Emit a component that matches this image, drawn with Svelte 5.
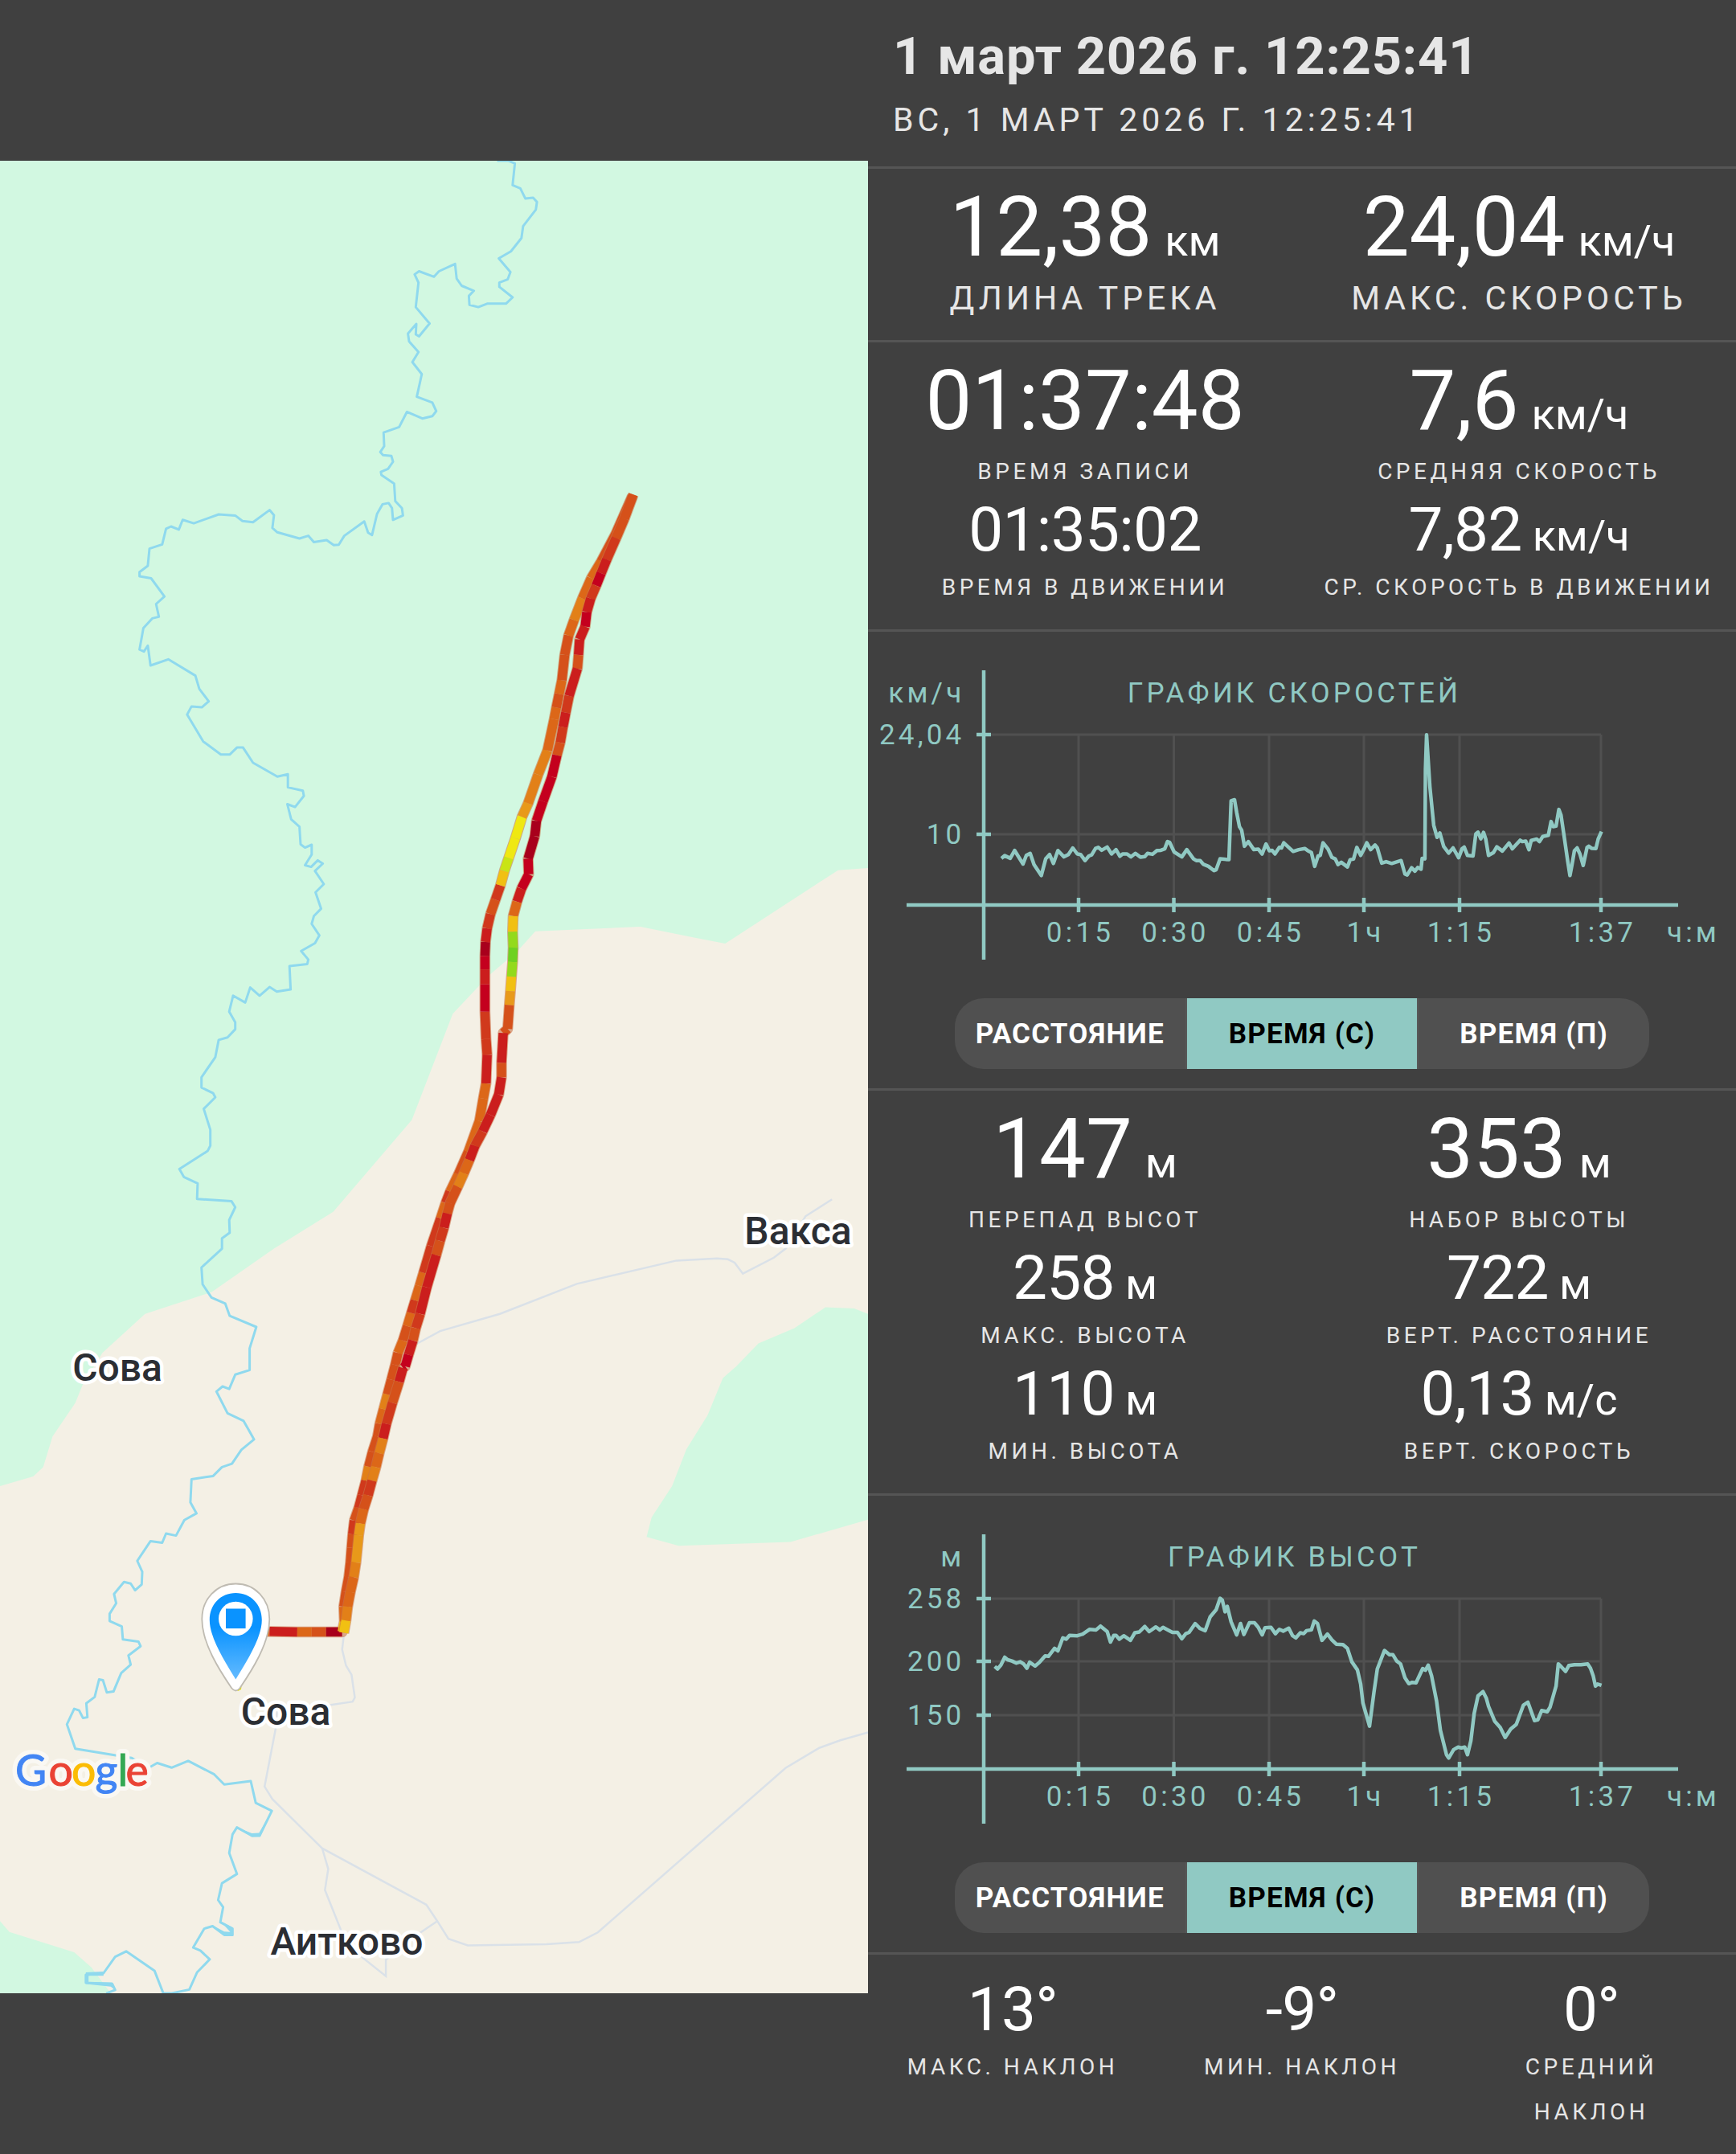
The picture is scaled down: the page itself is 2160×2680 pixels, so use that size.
<script>
  const title = '1 март 2026 г. 12:25:41';
  const subtitle = 'вс, 1 март 2026 г. 12:25:41';

  const summary = [
    { value: '12,38', unit: 'км', label: 'Длина трека' },
    { value: '24,04', unit: 'км/ч', label: 'Макс. скорость' }
  ];

  const speedStats = [
    { value: '01:37:48', label: 'Время записи', big: true },
    { value: '7,6', unit: 'км/ч', label: 'Средняя скорость', big: true },
    { value: '01:35:02', label: 'Время в движении' },
    { value: '7,82', unit: 'км/ч', label: 'Ср. скорость в движении' }
  ];

  const heightStats = [
    { value: '147', unit: 'м', label: 'Перепад высот', big: true },
    { value: '353', unit: 'м', label: 'Набор высоты', big: true },
    { value: '258', unit: 'м', label: 'Макс. высота' },
    { value: '722', unit: 'м', label: 'Верт. расстояние' },
    { value: '110', unit: 'м', label: 'Мин. высота' },
    { value: '0,13', unit: 'м/с', label: 'Верт. скорость' }
  ];

  const slopeStats = [
    { value: '13°', label: 'Макс. наклон' },
    { value: '-9°', label: 'Мин. наклон' },
    { value: '0°', label: 'Средний наклон' }
  ];

  const modes = ['Расстояние', 'Время (с)', 'Время (п)'];
  let speedMode = $state(1);
  let heightMode = $state(1);

  // Sample grids are 1568 units wide; each one has its own vertical step
  const SX = 1080 / 1568;
  const tiles = {
    a: { sy: 760 / 1568, oy: -20 },
    b: { sy: 800 / 1568, oy: 700 },
    c: { sy: 820 / 1568, oy: 1480 }
  };

  function project(points, { sy, oy }) {
    return points
      .trim()
      .split(/\s+/)
      .map((p) => {
        const [x, y] = p.split(',').map(Number);
        return `${(x * SX).toFixed(1)},${(y * sy + oy).toFixed(1)}`;
      })
      .join(' ');
  }

  const river = [
    project('898,41 918,41 930,48 926,104 940,112 949,138 963,136 970,147 968,167 945,209 942,240 923,274 901,292 922,327 917,346 902,354 902,365 926,392 914,408 880,408 864,417 848,411 847,388 856,375 834,362 825,344 822,306 793,325 784,339 757,325 749,333 756,354 751,417 776,459 757,492 751,487 752,460 737,485 739,505 756,532 745,558 762,589 753,647 781,662 788,684 781,697 763,703 735,686 721,725 693,739 694,774 687,789 692,797 707,799 710,814 701,832 688,840 689,848 712,870 714,915 726,933 728,952 710,963 708,933 702,920 691,923 681,948 672,1002 665,996 658,967 622,1004 612,1027 603,1028 590,1015 567,1020 557,1004 541,1011 501,995 492,984 495,951 487,938 457,969 438,966 425,952 395,949 350,972 330,963 323,988 309,980 300,986 293,1026 270,1037 267,1081 252,1097 252,1108 273,1113 297,1160 282,1179 287,1212 275,1216 259,1241 252,1296 260,1301 267,1286 272,1337 304,1321 353,1363 360,1397 377,1429 365,1444 346,1442 338,1463 367,1532', tiles.a),
    project('399,76 415,76 428,59 439,59 457,96 501,130 520,124 520,156 547,164 549,177 533,204 519,197 526,234 541,252 543,295 551,303 563,296 563,320 551,346 562,350 574,334 583,342 569,360 585,392 570,412 580,452 567,470 563,489 577,517 569,536 544,555 557,576 555,587 523,592 525,649 500,654 487,643 469,664 452,644 443,681 421,664 414,703 425,729 425,746 411,766 395,772 389,814 364,863 364,888 385,902 389,912 368,940 380,991 380,1030 375,1043 324,1087 332,1106 357,1122 356,1160 418,1165 425,1180 414,1211 415,1242 401,1256 401,1281 364,1327 366,1368 382,1400 407,1415 415,1445 463,1472 451,1524 451,1560', tiles.b),
    project('451,47 425,58 414,92 402,86 391,98 411,150 440,168 459,212 436,237 419,270 401,278 385,299 346,307 344,362 355,388 333,404 318,441 300,436 293,458 272,454 248,501 257,527 256,557 244,571 236,555 224,551 206,580 210,602 198,627 198,644 220,657 222,688 250,693 254,704 232,726 236,748 219,768 205,812 193,814 186,785 179,783 171,825 156,840 158,873 150,875 143,857 134,853 121,890 136,948 238,970 268,994 284,982 310,993 340,977 387,1009 405,1033 453,1025 462,1077 491,1096 469,1155 455,1155 428,1135 420,1152 414,1196 428,1246 401,1268 394,1308 403,1325 398,1361 420,1376 420,1391 405,1391 384,1370 369,1376 349,1421 362,1428 379,1449 356,1480 342,1521 309,1530 295,1530 279,1476 228,1430 208,1443 187,1482 155,1486 155,1505 203,1508 208,1522 192,1530', tiles.c)
  ].join(' ');

  // Places where the river widens
  const pools = [
    project('428,1135 455,1149 468,1148 491,1096 470,1157 455,1158', tiles.c),
    project('398,1358 421,1374 420,1393 404,1392 384,1368 405,1383 416,1384', tiles.c),
    project('155,1480 187,1478 187,1488 160,1488 160,1503 203,1504 208,1522 200,1514 155,1508', tiles.c)
  ];

  const forests = [
    '0,0 1080,0 ' +
      project('1568,353 1514,358 1310,537 1252,522 1157,496 967,507 935,555 883,615 818,708 744,967 602,1191 495,1281 382,1387 262,1440 185,1535', tiles.b) +
      ' ' +
      project('150,80 136,125 95,205 78,278 60,300 0,323', tiles.c),
    project('1568,1440 1543,1427 1491,1424 1435,1475 1370,1512 1330,1568', tiles.b) +
      ' ' +
      project('1306,66 1278,155 1240,235 1214,323 1177,398 1168,444 1226,465 1428,456 1568,403', tiles.c),
    project('0,1358 17,1384 134,1432 165,1468 200,1530 0,1530', tiles.c)
  ];

  const roads = [
    project('1503,1161 1455,1202 1420,1280 1398,1303 1342,1342 1327,1315 1315,1307 1295,1305 1222,1310 1042,1367 903,1440 795,1482 750,1515', tiles.b),
    project('621,680 618,712 625,750 635,772 641,826 637,836 595,844 500,855 498,900 478,1038 492,1068 582,1185 770,1319 790,1358 810,1400 845,1416 987,1413 1046,1408 1080,1385 1419,994 1480,946 1518,928 1568,909', tiles.c),
    project('582,1185 593,1234 587,1284 616,1380 655,1445 697,1489 697,1450 760,1385 790,1358', tiles.c)
  ];

  // Track segments are coloured by speed, from dark red (slow) to green (fast)
  const speedColors = {
    a: '#a8001c', b: '#c4001e', c: '#cb1e1d', d: '#d0391c', e: '#d5511a',
    f: '#dc6718', g: '#e28018', h: '#e8991a', i: '#f1c012', y: '#efe812',
    l: '#c9e414', k: '#93da1c', n: '#6fd121'
  };

  // Each point carries the colour of the segment that ends in it
  function parseTrack(points, tile) {
    return points.split(' ').map((p) => {
      const [x, y, color] = p.split(',');
      return { x: x * SX, y: y * tile.sy + tile.oy, color: speedColors[color] };
    });
  }

  function toTrack(points) {
    return {
      outline: points.map((p) => `${p.x.toFixed(1)},${p.y.toFixed(1)}`).join(' '),
      segments: points.slice(1).map((p, i) => ({ x1: points[i].x, y1: points[i].y, x2: p.x, y2: p.y, color: p.color }))
    };
  }

  const wayOut = [
    ...parseTrack('440,669,c 487,669,f 537,670,c 563,670,f 589,670,e 618,670,a 622,645,i 621,610,f 625,575,e 630,540,e 633,505,e 635,470,e 637,438,e 640,405,d 648,375,e 654,345,d 661,310,d 666,277,g 673,242,e 682,205,e 686,175,e 693,140,f 700,105,g 707,70,e 714,35,e', tiles.c),
    ...parseTrack('719,1535,e 728,1505,f 736,1470,e 743,1438,f 750,1407,d 758,1372,f 765,1340,f 779,1275,d 796,1207,d 805,1170,f 813,1142,d 828,1100,f 846,1045,e 866,970,f 873,915,f 878,878,f 880,808,c 878,770,d 876,703,d 876,636,b 876,600,c 876,567,b 877,533,a 880,500,c 886,465,d 895,430,e 904,395,d 911,360,i 919,328,l 931,280,y 943,228,y 954,195,h 972,125,g 989,66,g', tiles.b),
    ...parseTrack('1001,1475,f 1005,1445,f 1010,1410,e 1015,1375,f 1020,1310,e 1027,1260,e 1037,1220,f 1052,1165,g 1068,1113,f 1086,1070,f 1112,1000,e 1142,903,e', tiles.a)
  ];

  const wayBack = [
    ...parseTrack('1144,898,e 1128,960,e 1113,1010,e 1096,1065,d 1086,1100,c 1077,1132,b 1067,1165,d 1060,1200,c 1057,1237,b 1047,1270,c 1045,1310,c 1043,1345,e 1028,1415,c 1022,1458,d 1017,1495,c 1012,1535,d', tiles.a),
    ...parseTrack('1006,78,e 997,130,b 981,190,b 969,238,b 966,275,a 954,330,a 955,368,b 942,403,b 934,435,c 927,470,f 926,508,i 927,547,k 926,582,n 924,618,k 922,653,i 920,687,h 917,745,e 909,755,e 906,828,c 906,863,e 901,905,c 886,955,c 872,995,c 858,1030,d 848,1065,c 838,1097,f 827,1130,g 813,1170,e 808,1195,e 802,1230,c 795,1262,d 788,1297,e 771,1375,c 759,1440,c 751,1475,d 746,1505,e 738,1540,c 732,1568,b', tiles.b),
    ...parseTrack('728,42,b 721,75,c 709,125,e 698,175,d 692,210,c 685,245,g 679,278,f 672,310,g 665,345,d 657,378,e 651,412,f 648,440,h 643,505,h 639,540,g 633,575,f 628,610,f 625,643,g 621,672,i', tiles.c)
  ];

  const tracks = [toTrack(wayOut), toTrack(wayBack)];

  const places = [
    { name: 'Вакса', x: 993, y: 1348 },
    { name: 'Сова', x: 146, y: 1518 },
    { name: 'Сова', x: 355.5, y: 1946 },
    { name: 'Аитково', x: 431.5, y: 2232 }
  ];

  const googleLetters = [
    { char: 'G', x: 19, color: '#4285f4' },
    { char: 'o', x: 60.5, color: '#ea4335' },
    { char: 'o', x: 89, color: '#fbbc05' },
    { char: 'g', x: 118.5, color: '#4285f4' },
    { char: 'l', x: 146.5, color: '#34a853' },
    { char: 'e', x: 156.5, color: '#ea4335' }
  ];

  const timeTicks = [
    { x: 262, text: '0:15' },
    { x: 380.5, text: '0:30' },
    { x: 499, text: '0:45' },
    { x: 617, text: '1ч' },
    { x: 736, text: '1:15' },
    { x: 912, text: '1:37' }
  ];

  const speedChart = {
    title: 'График скоростей',
    unit: 'км/ч',
    ticks: [{ y: 128, text: '24,04' }, { y: 252, text: '10' }],
    line: project('241,750 247,741 257,750 265,723 280,770 286,740 293,733 300,772 313,810 321,752 328,737 335,768 343,723 354,745 362,737 370,714 378,735 384,737 392,758 399,742 404,738 411,716 416,712 422,722 432,711 440,735 448,720 455,743 460,735 468,735 475,745 483,733 492,746 500,744 505,733 514,736 522,723 529,722 536,717 541,692 545,695 553,728 567,745 576,720 588,752 593,758 600,758 606,771 615,778 625,793 629,790 636,752 652,755 656,550 662,546 666,590 671,640 675,652 680,708 687,692 697,720 705,718 712,735 719,700 725,724 730,722 735,735 743,712 747,714 751,696 760,712 768,726 778,720 789,716 794,723 801,730 807,778 813,742 817,740 822,696 831,718 838,747 844,752 849,772 855,764 866,780 871,755 877,753 883,712 890,740 896,718 901,696 908,720 916,704 920,714 928,767 936,762 946,768 963,758 970,805 974,808 982,783 988,795 993,782 999,788 1001,750 1006,752 1007,440 1009,320 1015,500 1022,635 1028,677 1033,662 1040,709 1049,732 1057,714 1067,748 1073,717 1077,711 1083,740 1093,742 1098,665 1102,659 1107,682 1112,660 1116,684 1121,740 1130,730 1136,710 1146,725 1158,697 1164,717 1178,687 1182,692 1188,690 1194,720 1198,688 1208,683 1213,692 1219,674 1229,670 1234,622 1238,640 1243,638 1248,580 1252,600 1258,680 1264,760 1268,810 1272,770 1276,724 1281,714 1286,735 1292,775 1299,712 1302,708 1307,715 1315,716 1319,683 1325,657', { sy: 560 / 1568, oy: 14 })
  };

  const heightChart = {
    title: 'График высот',
    unit: 'м',
    ticks: [{ y: 128, text: '258' }, { y: 206, text: '200' }, { y: 273, text: '150' }],
    line: project('229,408 234,414 240,405 247,386 252,392 260,395 268,400 275,397 281,402 287,412 292,398 302,407 310,398 320,383 326,384 337,365 343,371 352,340 358,343 364,334 378,335 388,331 400,320 412,321 420,312 432,325 438,350 444,334 448,334 454,343 462,335 474,346 482,328 490,326 500,313 508,325 520,314 527,321 533,315 543,322 550,327 559,327 567,342 574,330 580,327 591,306 600,318 609,323 618,290 629,273 636,246 640,250 645,278 649,265 656,302 666,333 673,306 679,332 689,304 698,304 705,315 712,333 717,316 728,315 736,330 743,320 750,324 760,317 767,335 773,340 781,328 787,330 792,323 801,321 806,300 812,306 820,346 830,331 838,345 846,355 858,356 866,365 874,397 884,416 890,450 894,495 906,550 914,470 920,414 933,370 942,380 948,380 955,395 962,402 970,435 977,449 983,446 990,447 1002,413 1007,417 1012,405 1018,430 1027,490 1034,560 1045,618 1049,626 1058,606 1066,600 1072,602 1078,600 1083,618 1089,585 1095,520 1102,478 1111,468 1117,484 1121,503 1132,538 1142,553 1151,577 1161,557 1171,546 1184,500 1192,493 1204,537 1210,535 1217,513 1227,516 1232,505 1243,455 1247,402 1252,408 1260,420 1266,406 1276,404 1288,404 1300,402 1305,412 1310,430 1314,455 1318,450 1325,453', { sy: 820 / 1568, oy: -1 })
  };
</script>

{#snippet stat(item)}
  <div class="stat">
    <div class="value" class:big={item.big}>
      {item.value}{#if item.unit}<span class="unit">{item.unit}</span>{/if}
    </div>
    <div class="label">{item.label}</div>
  </div>
{/snippet}

{#snippet chart(data)}
  <svg class="chart" viewBox="0 0 1080 456">
    <!-- Grid -->
    <g class="grid">
      {#each timeTicks as tick}
        <line x1={tick.x} x2={tick.x} y1="128" y2="340" />
      {/each}
      {#each data.ticks as tick}
        <line x1="144" x2="912" y1={tick.y} y2={tick.y} />
      {/each}
    </g>

    <!-- Axes -->
    <g class="axes">
      <line x1="144" x2="144" y1="48" y2="408" />
      <line x1="48" x2="1008" y1="340" y2="340" />
      {#each timeTicks as tick}
        <line x1={tick.x} x2={tick.x} y1="331" y2="349" />
      {/each}
      {#each data.ticks as tick}
        <line x1="135" x2="153" y1={tick.y} y2={tick.y} />
      {/each}
    </g>

    <polyline class="line" points={data.line} />

    <text class="middle" x="530.5" y="88">{data.title.toUpperCase()}</text>
    <text class="end" x="120.5" y="88">{data.unit}</text>
    {#each data.ticks as tick}
      <text class="end" x="120.5" y={tick.y + 12}>{tick.text}</text>
    {/each}
    {#each timeTicks as tick}
      <text class="middle" x={tick.x + 2} y="386">{tick.text}</text>
    {/each}
    <text class="middle" x="1027" y="386">ч:м</text>
  </svg>
{/snippet}

<div class="screen">
  <div class="map-side">
    <svg class="map" viewBox="0 0 1080 2280">
      <defs>
        <linearGradient id="pin" x1="0" y1="0" x2="0" y2="1">
          <stop offset="0.4" stop-color="#0a93ff" />
          <stop offset="1" stop-color="#64bbff" />
        </linearGradient>
      </defs>

      <rect width="1080" height="2280" fill="#f4f0e5" />
      {#each forests as points}
        <polygon {points} fill="#d2f8e1" />
      {/each}
      {#each roads as points}
        <polyline class="road" {points} />
      {/each}
      <polyline class="river" points={river} />
      {#each pools as points}
        <polygon {points} fill="#8fd9ee" />
      {/each}

      {#each tracks as track}
        <polyline class="track-edge" points={track.outline} />
        <g class="track">
          {#each track.segments as s}
            <line x1={s.x1} y1={s.y1} x2={s.x2} y2={s.y2} stroke={s.color} />
          {/each}
        </g>
      {/each}

      <!-- Finish marker -->
      <path d="M301 1894l-1 8-4 2-4-4z" fill="#e6e012" />
      <g transform="translate(293.3 1770.5)">
        <path
          d="M0 0C24 0 42 19 42 44C42 74 20 108 5 130Q0 136-5 130C-20 108-42 74-42 44C-42 19-24 0 0 0Z"
          fill="#fff"
          stroke="#bfbbb2"
          stroke-width="1.8"
        />
        <path d="M0 11.5C19 11.5 32.5 26 32.5 45C32.5 67 14 96 0 119C-14 96-32.5 67-32.5 45C-32.5 26-19 11.5 0 11.5Z" fill="url(#pin)" />
        <circle cy="43.5" r="21.3" fill="#fff" />
        <rect x="-12.3" y="31" width="24.6" height="24.6" fill="#0a93ff" />
      </g>

      {#each places as place}
        <text class="place" x={place.x} y={place.y}>{place.name}</text>
      {/each}

      <g class="google">
        {#each googleLetters as l}
          <text class="halo" x={l.x} y="2022">{l.char}</text>
        {/each}
        {#each googleLetters as l}
          <text x={l.x} y="2022" fill={l.color} stroke={l.color}>{l.char}</text>
        {/each}
      </g>
    </svg>
  </div>

  <div class="info">
    <header>
      <h1>{title}</h1>
      <p>{subtitle}</p>
    </header>

    <section class="stats summary">
      {#each summary as item}
        {@render stat({ ...item, big: true })}
      {/each}
    </section>

    <section class="stats">
      {#each speedStats as item}
        {@render stat(item)}
      {/each}
    </section>

    <section>
      {@render chart(speedChart)}
      <div class="modes">
        {#each modes as mode, i}
          <button class:active={speedMode === i} onclick={() => (speedMode = i)}>{mode}</button>
        {/each}
      </div>
    </section>

    <section class="stats">
      {#each heightStats as item}
        {@render stat(item)}
      {/each}
    </section>

    <section>
      {@render chart(heightChart)}
      <div class="modes">
        {#each modes as mode, i}
          <button class:active={heightMode === i} onclick={() => (heightMode = i)}>{mode}</button>
        {/each}
      </div>
    </section>

    <section class="stats slopes">
      {#each slopeStats as item}
        {@render stat(item)}
      {/each}
    </section>
  </div>
</div>

<style>
  :global(body) {
    background: #404040;
  }

  .screen {
    display: flex;
    width: 2160px;
    height: 2680px;
    overflow: hidden;
    background: #404040;
    color: #fff;
    font-family: Roboto, sans-serif;
  }

  .map-side,
  .info {
    width: 1080px;
    flex: none;
  }

  .map-side {
    box-sizing: border-box;
    padding-top: 200px;
  }

  .map {
    display: block;
    width: 1080px;
    height: 2280px;
  }

  .road {
    fill: none;
    stroke: #dae1e8;
    stroke-width: 2.5;
  }

  .river {
    fill: none;
    stroke: #8fd9ee;
    stroke-width: 3;
    stroke-linejoin: round;
  }

  .track line {
    stroke-width: 11.5;
  }

  .track-edge {
    fill: none;
    stroke: #c9744a;
    stroke-opacity: 0.6;
    stroke-width: 13.5;
    stroke-linejoin: round;
  }

  .place {
    font-size: 48px;
    font-weight: 500;
    text-anchor: middle;
    fill: #2b2e34;
    stroke: #fff;
    stroke-width: 9px;
    stroke-linejoin: round;
    paint-order: stroke;
  }

  .google {
    font-family: Lato, sans-serif;
    font-size: 53.5px;
    stroke-width: 1px;
  }

  .halo {
    fill: none;
    stroke: #faf8f3;
    stroke-width: 12px;
    stroke-linejoin: round;
  }

  header,
  section {
    box-sizing: border-box;
    border-bottom: 3px solid #555;
  }

  header {
    height: 210px;
    padding: 32px 31px 0;
  }

  h1 {
    margin: 0 0 13px;
    font-size: 65px;
    font-weight: 700;
    line-height: 76px;
    letter-spacing: 0.85px;
    color: #e6e6e6;
  }

  p {
    margin: 0;
    font-size: 41px;
    line-height: 56px;
    letter-spacing: 5px;
    text-transform: uppercase;
    color: #e6e6e6;
  }

  .stats {
    display: grid;
    grid-template-columns: 1fr 1fr;
    padding: 13px 0 24px;
  }

  .stat {
    text-align: center;
  }

  .value {
    font-size: 76.5px;
    line-height: 88px;
    height: 88px;
    letter-spacing: -0.7px;
    white-space: nowrap;
  }

  .value.big {
    font-size: 103px;
    line-height: 120px;
    height: 120px;
    letter-spacing: 0;
  }

  .unit {
    margin-left: 13px;
    font-size: 54px;
    line-height: 1;
    letter-spacing: 0;
  }

  .big .unit {
    margin-left: 16px;
  }

  .label {
    font-size: 28px;
    line-height: 56px;
    letter-spacing: 4.5px;
    text-transform: uppercase;
    color: #e6e6e6;
  }

  .summary .label {
    font-size: 41px;
    letter-spacing: 5px;
  }

  .slopes {
    grid-template-columns: repeat(3, 1fr);
    padding-top: 24px;
    border-bottom: none;
  }

  .slopes .label {
    padding: 0 36px;
  }

  .chart {
    display: block;
    width: 1080px;
    height: 456px;
  }

  .chart text {
    font-size: 35px;
    letter-spacing: 4.2px;
    fill: #90c9c3;
  }

  .middle {
    text-anchor: middle;
  }

  .end {
    text-anchor: end;
  }

  .grid line {
    stroke: #505050;
    stroke-width: 3;
  }

  .axes line {
    stroke: #90c9c3;
    stroke-width: 4.5;
  }

  .line {
    fill: none;
    stroke: #90c9c3;
    stroke-width: 4.5;
    stroke-linejoin: round;
  }

  .modes {
    display: flex;
    width: 864px;
    height: 88px;
    margin: 0 auto 24px;
    overflow: hidden;
    border-radius: 36px;
    background: #505050;
  }

  button {
    flex: 1;
    padding: 0;
    border: 0;
    border-left: 2px solid #585858;
    background: none;
    color: #fff;
    font: 700 35px Roboto, sans-serif;
    letter-spacing: 1.2px;
    text-transform: uppercase;
    cursor: pointer;
  }

  button:first-child {
    border-left: 0;
  }

  button.active {
    background: #90c9c3;
    color: #000;
  }
</style>
